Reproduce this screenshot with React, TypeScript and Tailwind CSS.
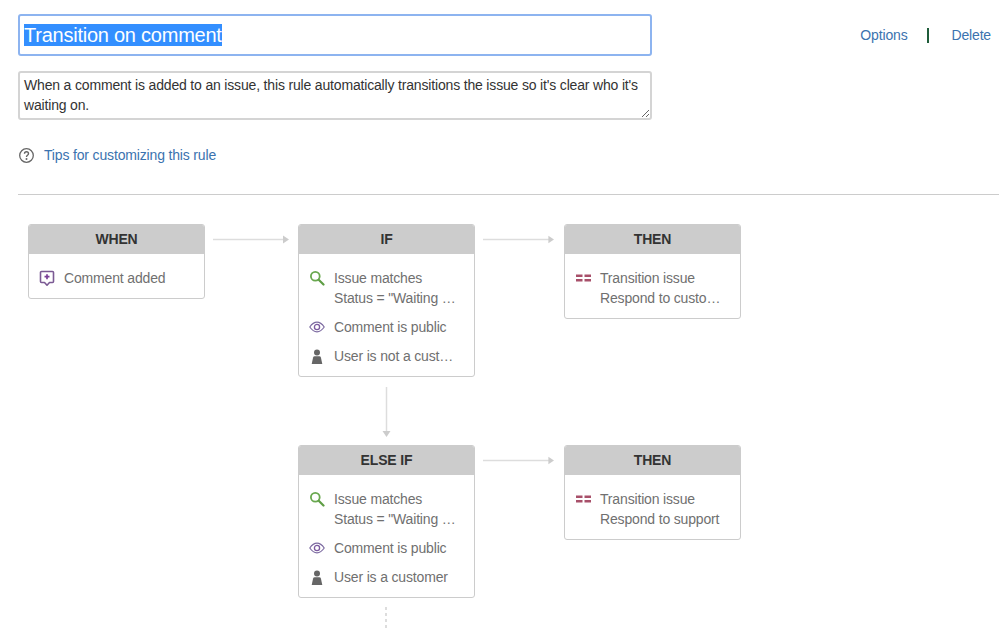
import React from "react";

const Comment = () => (
  <svg width="16" height="17" viewBox="0 0 16 17" fill="none">
    <path d="M2.5 1.5h11a1 1 0 0 1 1 1v9a1 1 0 0 1-1 1h-3L8 15.2 5.5 12.5h-3a1 1 0 0 1-1-1v-9a1 1 0 0 1 1-1z" stroke="#7b5a94" strokeWidth="1.6" strokeLinejoin="round" />
    <path d="M8 4.2v5M5.5 6.7h5" stroke="#7b3f98" strokeWidth="1.7" />
  </svg>
);
const Search = () => (
  <svg width="16" height="16" viewBox="0 0 16 16" fill="none">
    <circle cx="6.3" cy="6.3" r="4.4" stroke="#69a84f" strokeWidth="1.8" />
    <path d="M9.7 9.7l4.8 4.8" stroke="#5f9e45" strokeWidth="2.2" strokeLinecap="round" />
  </svg>
);
const Eye = () => (
  <svg width="16" height="12" viewBox="0 0 16 12" fill="none">
    <path d="M.8 6C3 2.8 5.3 1.2 8 1.2S13 2.8 15.2 6C13 9.2 10.7 10.8 8 10.8S3 9.2.8 6z" stroke="#7c6aa0" strokeWidth="1.2" />
    <circle cx="8" cy="6" r="2.6" stroke="#7c5aa0" strokeWidth="1.3" />
  </svg>
);
const User = () => (
  <svg width="12" height="15" viewBox="0 0 12 15" fill="#666">
    <circle cx="6" cy="3.4" r="3" />
    <path d="M3.6 7.2h4.8c.8 0 1.3.4 1.5 1.2L11.3 15H.7l1.4-6.6c.2-.8.7-1.2 1.5-1.2z" />
  </svg>
);
const Transition = () => (
  <svg width="15" height="8" viewBox="0 0 15 8" fill="#a8506a">
    <rect x="0" y="0.5" width="6.5" height="2.5" />
    <rect x="8.5" y="0.5" width="6.5" height="2.5" />
    <rect x="0" y="5" width="6.5" height="2.5" />
    <rect x="8.5" y="5" width="6.5" height="2.5" />
  </svg>
);

type Item = { icon: React.ReactNode; lines: string[] };

const Node = ({ title, items, pos }: { title: string; items: Item[]; pos: string }) => (
  <div className={`absolute w-[177px] rounded-[3px] border border-[#ccc] bg-white ${pos}`}>
    <div className="flex h-[29px] items-center justify-center rounded-t-[2px] bg-[#ccc] text-[14px] font-bold tracking-[-0.16px] text-[#333]">{title}</div>
    <div className="flex flex-col gap-[9px] pt-[14px] pb-[10px]">
      {items.map((it, i) => (
        <div key={i} className="flex text-[14px] leading-[20px] tracking-[-0.16px] text-[#707070]">
          <div className="flex h-[20px] w-[35px] shrink-0 items-center justify-center pl-[1px]">{it.icon}</div>
          <div className="min-w-0">
            {it.lines.map((l) => (
              <div key={l} className="whitespace-nowrap">{l}</div>
            ))}
          </div>
        </div>
      ))}
    </div>
  </div>
);

const HArrow = ({ pos }: { pos: string }) => (
  <svg className={`absolute ${pos}`} width="76" height="9" viewBox="0 0 76 9">
    <path d="M0 4.5h71" stroke="#ddd" strokeWidth="1.5" />
    <path d="M70 0.5l6 4-6 4z" fill="#ccc" />
  </svg>
);

const match = "Status = \"Waiting …";

export default function App() {
  return (
    <div className="h-[630px] w-[999px] overflow-hidden bg-white font-['Liberation_Sans',Arial,sans-serif]">
      <div className="flex items-start justify-between pt-[14px] pl-[18px] pr-[8px]">
        <div className="flex h-[42px] w-[634px] items-center rounded-[3px] border-2 border-[#8db4f0] px-[4px] text-[20px] tracking-[-0.24px] text-black">
          <span className="bg-[#338fff] leading-[22px] text-white">Transition on comment</span>
        </div>
        <div className="mt-[11px] flex items-center text-[14px] leading-[20px] tracking-[-0.16px] text-[#3b73af]">
          <span>Options</span>
          <span className="ml-[20px] mr-[22px] h-[15px] w-[2px] bg-[#1f5c3a]" />
          <span>Delete</span>
        </div>
      </div>
      <textarea
        readOnly
        rows={2}
        className="mt-[15px] ml-[18px] block h-[49px] w-[634px] rounded-[3px] border-2 border-[#d4d4d4] px-[4px] pt-[2px] pb-[3px] text-[14px] leading-[20px] tracking-[-0.17px] text-[#333] outline-none"
        value="When a comment is added to an issue, this rule automatically transitions the issue so it's clear who it's waiting on."
      />
      <div className="mt-[25px] ml-[19px] flex items-center gap-[10px] text-[14px] leading-[20px] tracking-[-0.16px] text-[#3b73af]">
        <svg width="15" height="15" viewBox="0 0 15 15" fill="none">
          <circle cx="7.5" cy="7.5" r="6.8" stroke="#666" strokeWidth="1.3" />
          <path d="M5.5 5.8c0-1.2.9-2 2-2s2 .8 2 1.9c0 1.6-2 1.6-2 3.2" stroke="#666" strokeWidth="1.4" fill="none" />
          <circle cx="7.5" cy="11" r="1" fill="#666" />
        </svg>
        <span>Tips for customizing this rule</span>
      </div>
      <div className="mt-[29px] ml-[18px] h-px bg-[#ccc]" />
      <div className="relative h-[435px]">
        <Node title="WHEN" pos="left-[28px] top-[29px]" items={[{ icon: <Comment />, lines: ["Comment added"] }]} />
        <HArrow pos="left-[213px] top-[40px]" />
        <Node
          title="IF"
          pos="left-[298px] top-[29px]"
          items={[
            { icon: <Search />, lines: ["Issue matches", match] },
            { icon: <Eye />, lines: ["Comment is public"] },
            { icon: <User />, lines: ["User is not a cust…"] },
          ]}
        />
        <HArrow pos="left-[483px] top-[40px] w-[71px]" />
        <Node title="THEN" pos="left-[564px] top-[29px]" items={[{ icon: <Transition />, lines: ["Transition issue", "Respond to custo…"] }]} />
        <svg className="absolute left-[382px] top-[192px]" width="9" height="50" viewBox="0 0 9 50">
          <path d="M4.5 0v45" stroke="#ddd" strokeWidth="1.5" />
          <path d="M.5 44l4 6 4-6z" fill="#ccc" />
        </svg>
        <Node
          title="ELSE IF"
          pos="left-[298px] top-[250px]"
          items={[
            { icon: <Search />, lines: ["Issue matches", match] },
            { icon: <Eye />, lines: ["Comment is public"] },
            { icon: <User />, lines: ["User is a customer"] },
          ]}
        />
        <HArrow pos="left-[483px] top-[261px] w-[71px]" />
        <Node title="THEN" pos="left-[564px] top-[250px]" items={[{ icon: <Transition />, lines: ["Transition issue", "Respond to support"] }]} />
        <svg className="absolute left-[384px] top-[412px]" width="4" height="21" viewBox="0 0 4 21">
          <path d="M2 0v21" stroke="#ddd" strokeWidth="2" strokeDasharray="3 3" />
        </svg>
      </div>
    </div>
  );
}
